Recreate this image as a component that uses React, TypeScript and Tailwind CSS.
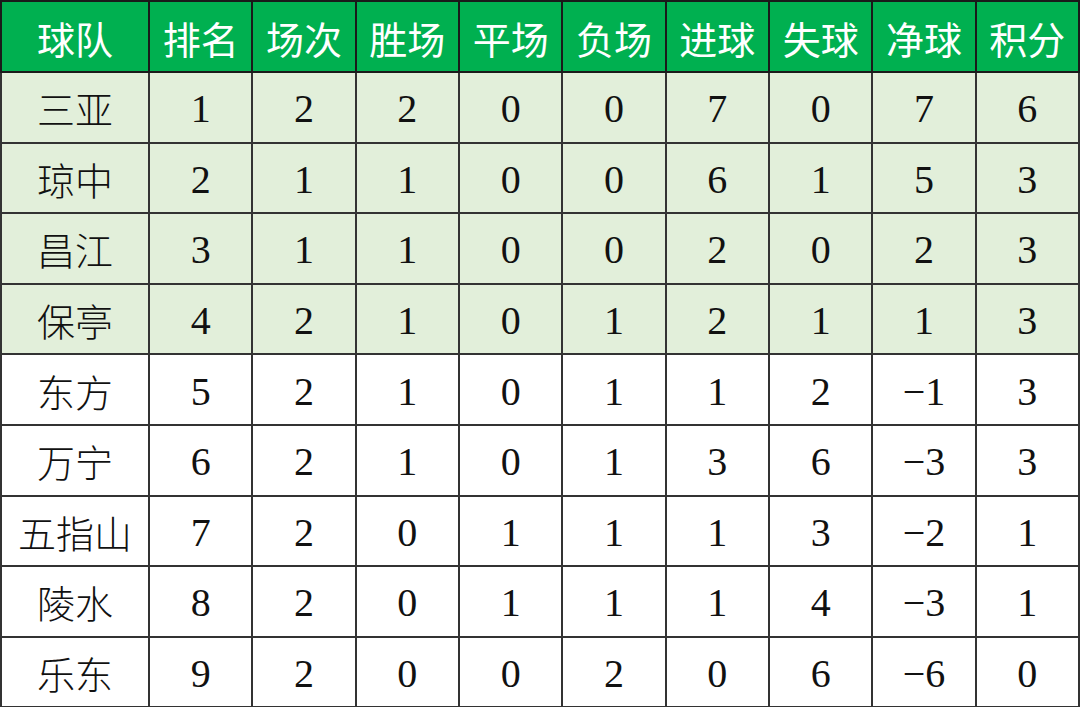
import React from 'react';

const headers = ['球队', '排名', '场次', '胜场', '平场', '负场', '进球', '失球', '净球', '积分'];

const rows: (string | number)[][] = [
  ['三亚', 1, 2, 2, 0, 0, 7, 0, 7, 6],
  ['琼中', 2, 1, 1, 0, 0, 6, 1, 5, 3],
  ['昌江', 3, 1, 1, 0, 0, 2, 0, 2, 3],
  ['保亭', 4, 2, 1, 0, 1, 2, 1, 1, 3],
  ['东方', 5, 2, 1, 0, 1, 1, 2, '−1', 3],
  ['万宁', 6, 2, 1, 0, 1, 3, 6, '−3', 3],
  ['五指山', 7, 2, 0, 1, 1, 1, 3, '−2', 1],
  ['陵水', 8, 2, 0, 1, 1, 1, 4, '−3', 1],
  ['乐东', 9, 2, 0, 0, 2, 0, 6, '−6', 0],
];

const App: React.FC = () => {
  return (
    <div className="w-[1080px] h-[707px] bg-white overflow-hidden">
      <table className="w-[1080px] h-[707px] table-fixed border-collapse border-2 border-[#111]">
        <colgroup>
          <col className="w-[148px]" />
          {headers.slice(1).map((h) => (
            <col key={h} />
          ))}
        </colgroup>
        <thead>
          <tr className="h-[71px] bg-[#00b050]">
            {headers.map((h) => (
              <th
                key={h}
                className="border-2 border-[#1a1a1a] p-0 pt-[1px] text-center text-[38px] font-normal text-white font-['Noto_Sans_CJK_SC',sans-serif]"
              >
                {h}
              </th>
            ))}
          </tr>
        </thead>
        <tbody>
          {rows.map((r, i) => (
            <tr key={i} className={i < 4 ? 'h-[70.6px] bg-[#e2efda]' : 'h-[70.6px] bg-white'}>
              {r.map((c, j) =>
                j === 0 ? (
                  <td
                    key={j}
                    className="border-2 border-[#333] p-0 pt-[1px] text-center text-[38px] text-[#111] font-light font-['Noto_Sans_CJK_SC',sans-serif]"
                  >
                    {c}
                  </td>
                ) : (
                  <td
                    key={j}
                    className="border-2 border-[#333] p-0 pt-[4px] text-center text-[40px] text-[#111] font-[Liberation_Serif]"
                  >
                    {c}
                  </td>
                )
              )}
            </tr>
          ))}
        </tbody>
      </table>
    </div>
  );
};

export default App;
